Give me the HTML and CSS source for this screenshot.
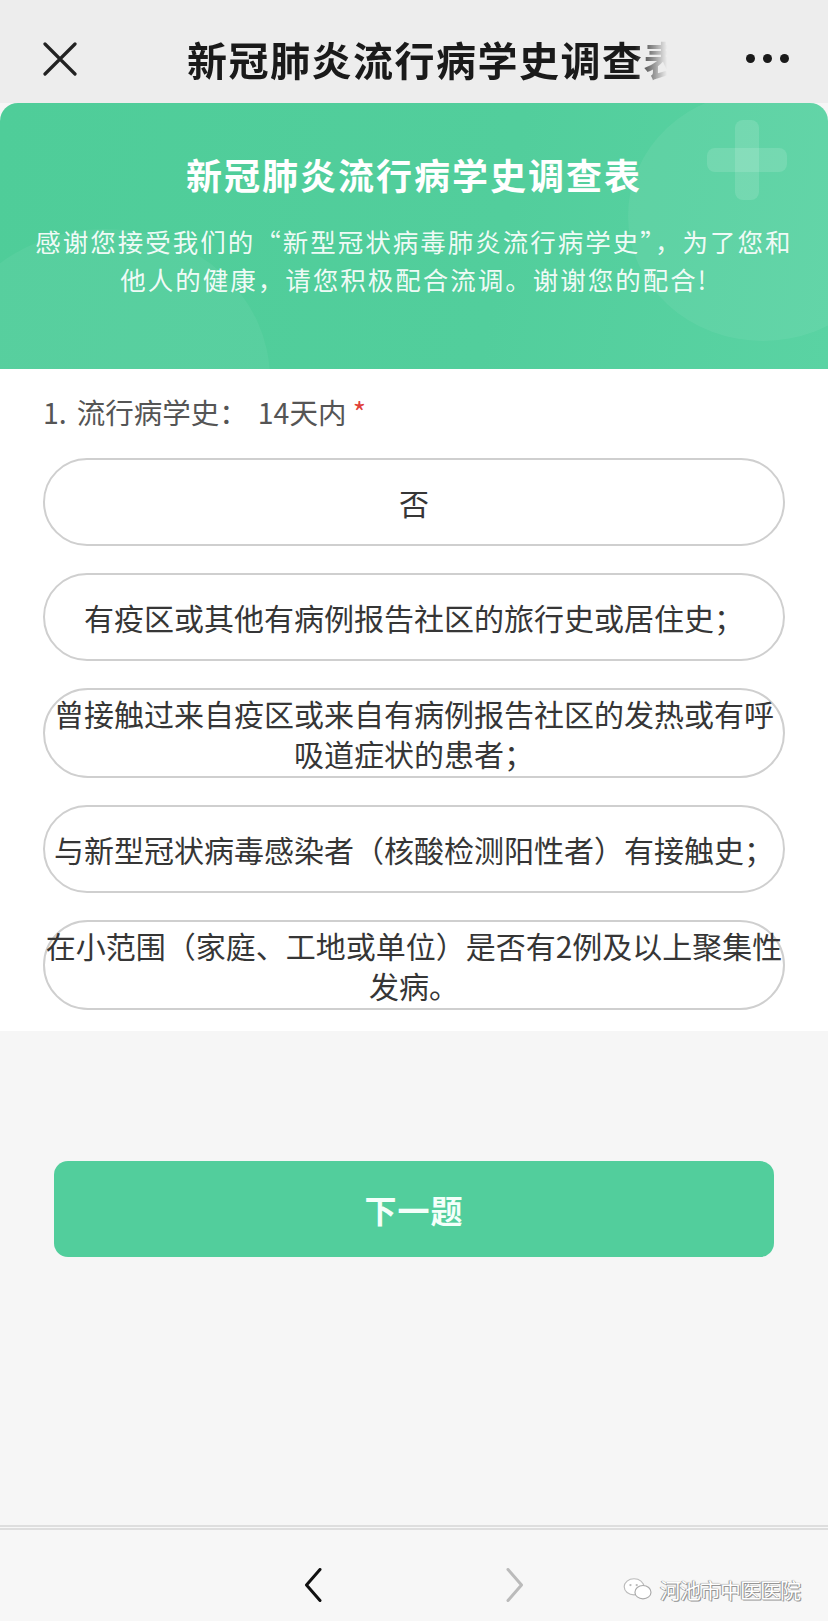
FILE: index.html
```html
<!DOCTYPE html>
<html lang="zh-CN">
<head>
<meta charset="utf-8">
<title>新冠肺炎流行病学史调查表</title>
<link rel="stylesheet" href="styles.css">
</head>
<body>
<div class="page">
  <nav class="navbar">
    <svg class="nav-close" viewBox="0 0 34 34" width="34" height="34"><path d="M2 2 L32 32 M32 2 L2 32" stroke="#222" stroke-width="3.2" stroke-linecap="round" fill="none"/></svg>
    <div class="nav-title">新冠肺炎流行病学史调查表</div>
    <div class="nav-more"><span></span><span></span><span></span></div>
  </nav>

  <header class="hero">
    <div class="hero-deco-circle"></div>
    <div class="hero-deco-circle2"></div>
    <svg class="hero-plus" viewBox="0 0 80 80" width="80" height="80"><rect x="28" y="0" width="24" height="80" rx="8" fill="#ffffff" fill-opacity="0.13"/><rect x="0" y="28" width="80" height="24" rx="8" fill="#ffffff" fill-opacity="0.13"/></svg>
    <h1 class="hero-title">新冠肺炎流行病学史调查表</h1>
    <p class="hero-desc">感谢您接受我们的“新型冠状病毒肺炎流行病学史”，为了您和<br>他人的健康，请您积极配合流调。谢谢您的配合!</p>
  </header>

  <section class="question">
    <div class="q-label"><span class="q-num">1.</span>流行病学史：<span class="q-days">14天内</span> <span class="req">*</span></div>
    <div class="options">
      <div class="option"><span>否</span></div>
      <div class="option"><span>有疫区或其他有病例报告社区的旅行史或居住史；</span></div>
      <div class="option"><span>曾接触过来自疫区或来自有病例报告社区的发热或有呼吸道症状的患者；</span></div>
      <div class="option"><span>与新型冠状病毒感染者（核酸检测阳性者）有接触史；</span></div>
      <div class="option"><span>在小范围（家庭、工地或单位）是否有2例及以上聚集性发病。</span></div>
    </div>
  </section>

  <section class="actions">
    <button class="next-btn">下一题</button>
  </section>

  <footer class="toolbar">
    <svg class="arrow" viewBox="0 0 18 34" width="18" height="34"><path d="M16 1.5 L2.5 17 L16 32.5" stroke="#111" stroke-width="3" fill="none" stroke-linejoin="round" stroke-linecap="round"/></svg>
    <svg class="arrow" viewBox="0 0 18 34" width="18" height="34"><path d="M2 1.5 L15.5 17 L2 32.5" stroke="#bbbbbb" stroke-width="3" fill="none" stroke-linejoin="round" stroke-linecap="round"/></svg>
    <div class="watermark">
      <svg viewBox="0 0 36 28" width="33" height="25"><ellipse cx="13" cy="11" rx="11" ry="9" fill="#fff" stroke="#bbb" stroke-width="1.3"/><ellipse cx="23" cy="17" rx="9" ry="7.5" fill="#fff" stroke="#aaa" stroke-width="1.3"/><circle cx="9" cy="9" r="1.3" fill="#bbb"/><circle cx="16" cy="9" r="1.3" fill="#bbb"/></svg>
      <span>河池市中医医院</span>
    </div>
  </footer>
</div>
</body>
</html>
```

FILE: styles.css
```css
* { box-sizing: border-box; }
html, body { margin: 0; padding: 0; }
body {
  font-family: "Noto Sans CJK SC", "Noto Sans", "Liberation Sans", sans-serif;
  background: #f6f6f6;
  width: 828px;
}
.page {
  width: 828px;
  height: 1621px;
  display: flex;
  flex-direction: column;
  position: relative;
  overflow: hidden;
}

/* nav */
.navbar {
  height: 103px;
  flex: none;
  background: #ededed;
  display: flex;
  align-items: center;
  padding: 14px 39px 0 43px;
}
.nav-close { flex: none; display: block; }
.nav-title {
  margin-left: 110px;
  width: 480px;
  font-size: 40px;
  font-weight: 700;
  letter-spacing: 1.5px;
  color: #1a1a1a;
  white-space: nowrap;
  overflow: hidden;
  line-height: 60px;
  -webkit-mask-image: linear-gradient(to right, #000 calc(100% - 32px), transparent);
  mask-image: linear-gradient(to right, #000 calc(100% - 32px), transparent);
}
.nav-more {
  margin-left: auto;
  display: flex;
  gap: 8px;
}
.nav-more span {
  width: 9px;
  height: 9px;
  border-radius: 50%;
  background: #1a1a1a;
}

/* hero */
.hero {
  height: 266px;
  flex: none;
  position: relative;
  overflow: hidden;
  background: linear-gradient(100deg, #4fcd99 0%, #52ce9c 60%, #5ad3a3 100%);
  border-radius: 18px 18px 0 0;
  text-align: center;
  color: #fff;
  padding-top: 41px;
}
.hero-deco-circle {
  position: absolute;
  right: -70px;
  top: -12px;
  width: 270px;
  height: 250px;
  border-radius: 50%;
  background: rgba(255,255,255,0.06);
}
.hero-deco-circle2 {
  position: absolute;
  left: -60px;
  bottom: -160px;
  width: 330px;
  height: 300px;
  border-radius: 50%;
  background: rgba(255,255,255,0.05);
}
.hero-plus {
  position: absolute;
  left: 707px;
  top: 17px;
}
.hero-title {
  position: relative;
  margin: 0;
  font-size: 36px;
  font-weight: 700;
  letter-spacing: 2px;
  line-height: 60px;
}
.hero-desc {
  position: relative;
  margin: 18px 0 0;
  font-size: 25.5px;
  letter-spacing: 2px;
  line-height: 38px;
  color: rgba(255,255,255,0.93);
}

/* question */
.question {
  flex: none;
  background: #fff;
  padding: 23px 43px 21px;
}
.q-label {
  font-size: 28.5px;
  line-height: 40px;
  color: #555;
  margin-bottom: 26px;
}
.q-num { margin-right: 10px; }
.q-days { margin-left: 10px; }
.req { color: #e0403a; }
.options {
  display: flex;
  flex-direction: column;
  gap: 27px;
}
.option {
  min-height: 88px;
  border: 2px solid #cfcfcf;
  border-radius: 46px;
  background: #fff;
  display: flex;
  align-items: center;
  justify-content: center;
  padding: 3px 0;
}
.option span {
  display: block;
  margin: 0 -4px;
  text-align: center;
  font-size: 30px;
  line-height: 40px;
  color: #363636;
}

/* actions */
.actions {
  flex: 1;
  background: #f6f6f6;
  padding: 130px 54px 0;
}
.next-btn {
  display: block;
  width: 100%;
  height: 96px;
  border: none;
  border-radius: 14px;
  background: #52ce9c;
  color: #f4fffa;
  font-family: inherit;
  font-size: 32px;
  font-weight: 700;
  letter-spacing: 1px;
}

/* toolbar */
.toolbar {
  height: 96px;
  flex: none;
  background: #f7f7f7;
  border-top: 5px double #dedede;
  display: flex;
  justify-content: center;
  align-items: flex-start;
  gap: 184px;
  padding-top: 38px;
  position: relative;
}
.arrow { display: block; }
.watermark {
  position: absolute;
  left: 622px;
  top: 44px;
  display: flex;
  align-items: center;
  gap: 5px;
}
.watermark svg { display: block; }
.watermark span {
  font-size: 21px;
  letter-spacing: -1px;
  color: #fff;
  text-shadow: 0 0 1px #777, 1px 1px 0 #999, -1px 0 0 #aaa;
}
```
